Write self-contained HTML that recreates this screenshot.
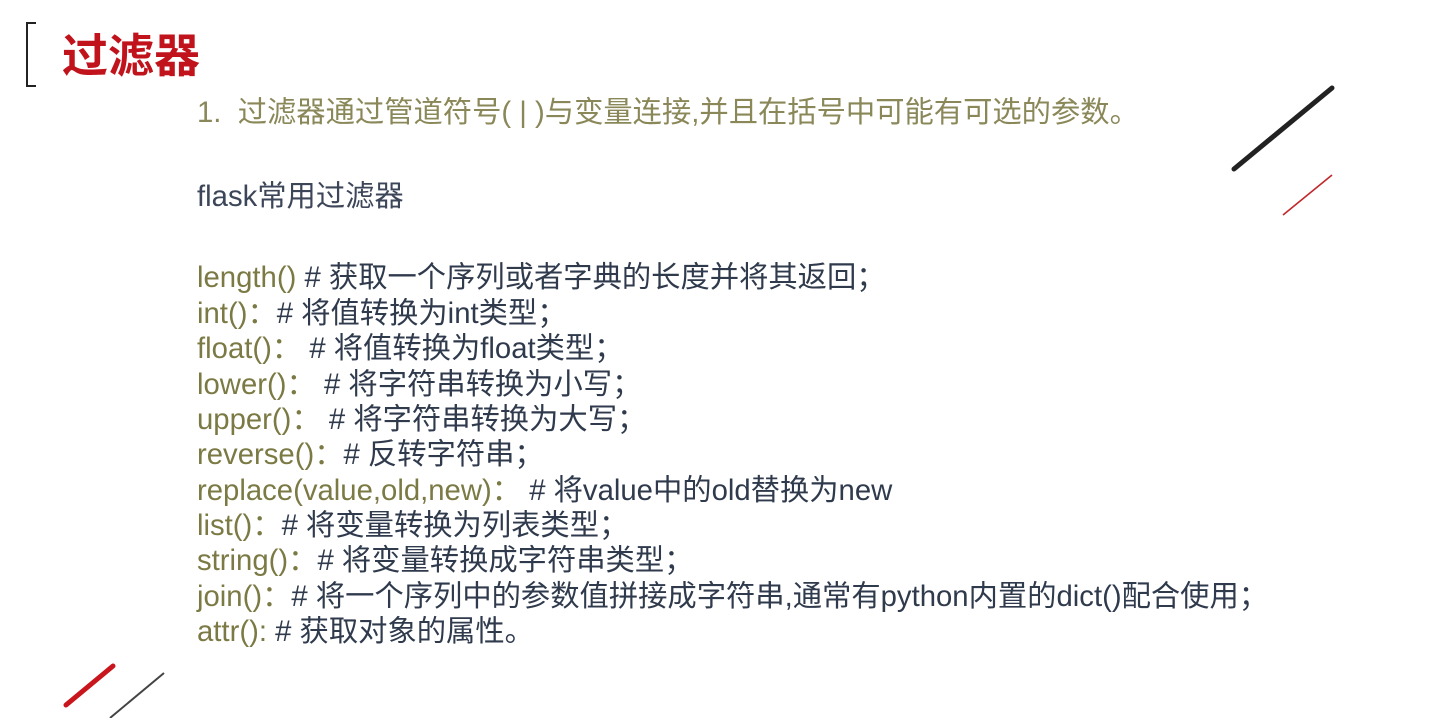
<!DOCTYPE html>
<html><head><meta charset="utf-8"><style>
body{margin:0;width:1440px;height:718px;background:#fff;position:relative;overflow:hidden;font-family:"Liberation Sans","Noto Sans CJK SC",sans-serif;}
.t{position:absolute;white-space:nowrap;}
.f{color:#7b7a45}
.c{color:#2f3a4c}
.l{position:absolute;left:197px;font-size:29.3px;white-space:nowrap;line-height:30px;}
</style></head><body>
<svg width="1440" height="718" style="position:absolute;left:0;top:0">
<path d="M36 23 H27 V86 H36" fill="none" stroke="#222" stroke-width="2"/>
<line x1="1234" y1="169" x2="1332" y2="88" stroke="#222" stroke-width="5" stroke-linecap="round"/>
<line x1="1283" y1="215" x2="1332" y2="175" stroke="#c0282a" stroke-width="1.6"/>
<line x1="66" y1="705" x2="113" y2="666" stroke="#c8161c" stroke-width="5" stroke-linecap="round"/>
<line x1="110" y1="718" x2="164" y2="673" stroke="#444" stroke-width="2"/>
</svg>
<div class="t" style="left:62px;top:28px;font-size:46px;font-weight:bold;color:#c0131b;line-height:56px">过滤器</div>
<div class="t f" style="left:197px;top:97px;font-size:29.3px;line-height:32px;color:#8a8758">1.&nbsp;&nbsp;过滤器通过管道符号( | )与变量连接,并且在括号中可能有可选的参数。</div>
<div class="t c" style="left:197px;top:181px;font-size:29.3px;line-height:32px;color:#3c4658">flask常用过滤器</div>
<div class="l" style="top:263px"><span class="f">length()</span> <span class="c"># 获取一个序列或者字典的长度并将其返回；</span></div>
<div class="l" style="top:299px"><span class="f">int()：</span><span class="c"># 将值转换为int类型；</span></div>
<div class="l" style="top:334px"><span class="f">float()：</span> <span class="c"># 将值转换为float类型；</span></div>
<div class="l" style="top:370px"><span class="f">lower()：</span> <span class="c"># 将字符串转换为小写；</span></div>
<div class="l" style="top:405px"><span class="f">upper()：</span> <span class="c"># 将字符串转换为大写；</span></div>
<div class="l" style="top:440px"><span class="f">reverse()：</span><span class="c"># 反转字符串；</span></div>
<div class="l" style="top:476px"><span class="f">replace(value,old,new)：</span> <span class="c"># 将value中的old替换为new</span></div>
<div class="l" style="top:511px"><span class="f">list()：</span><span class="c"># 将变量转换为列表类型；</span></div>
<div class="l" style="top:546px"><span class="f">string()：</span><span class="c"># 将变量转换成字符串类型；</span></div>
<div class="l" style="top:582px"><span class="f">join()：</span><span class="c"># 将一个序列中的参数值拼接成字符串,通常有python内置的dict()配合使用；</span></div>
<div class="l" style="top:617px"><span class="f">attr():</span> <span class="c"># 获取对象的属性。</span></div>
</body></html>
